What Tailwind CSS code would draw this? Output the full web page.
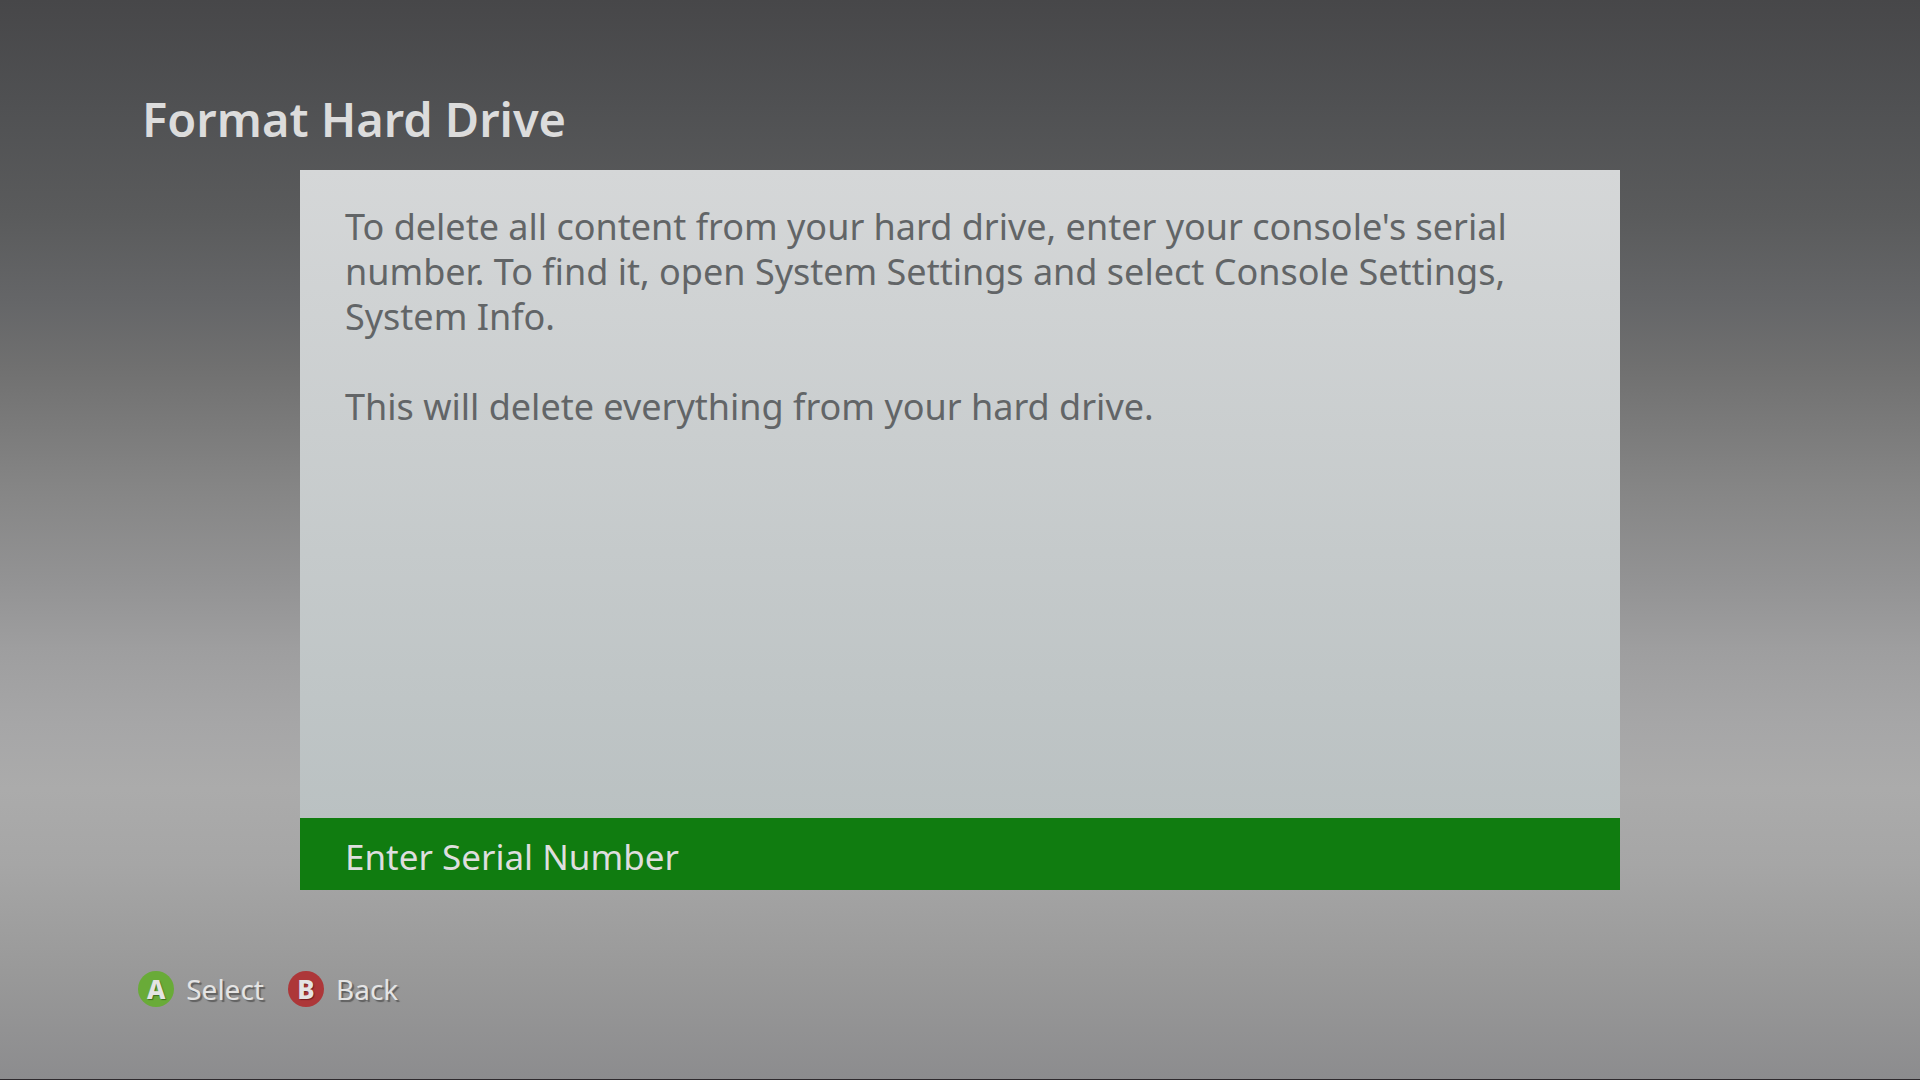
<!DOCTYPE html>
<html lang="en">
<head>
<meta charset="utf-8">
<meta name="viewport" content="width=device-width, initial-scale=1">
<title>Format Hard Drive</title>
<script src="https://cdn.jsdelivr.net/npm/@tailwindcss/browser@4"></script>
</head>
<body class="flex min-h-screen flex-col border-b border-[#2e2a2e] bg-[linear-gradient(to_bottom,#474749_0%,#505153_10%,#5a5b5c_20%,#656668_28%,#707070_34%,#858585_45%,#939394_54%,#9e9e9f_60%,#a6a6a7_67%,#ababab_73%,#a6a6a6_80%,#999999_90%,#8c8c8e_100%)] font-['Noto_Sans',sans-serif]">
  <header class="px-[7.4%] pt-[87px]">
    <h1 class="text-[47px]/[64px] font-semibold text-[#dcdcdc]">Format Hard Drive</h1>
  </header>

  <main class="mx-auto mt-[19px] flex w-[68.75%] flex-col">
    <section class="min-h-[648px] space-y-[45px] bg-linear-to-b from-[#d5d7d8] to-[#bac1c2] px-[45px] pt-[34px] text-4xl/[45px] text-[#626567]">
      <p>To delete all content from your hard drive, enter your console's serial<br>number. To find it, open System Settings and select Console Settings,<br>System Info.</p>
      <p>This will delete everything from your hard drive.</p>
    </section>
    <button type="button" class="h-[72px] bg-[#107c10] px-[45px] pt-1 text-left text-[35px]/[45px] text-[#dedede]">Enter Serial Number</button>
  </main>

  <footer class="flex gap-6 px-[7.2%] pt-[79px] text-[28px]/[40px] text-[#e4e4e4]">
    <button type="button" class="flex items-center gap-3 text-shadow-[2px_2px_1px_#606060]">
      <span class="flex size-9 items-center justify-center rounded-full bg-[#69ab38] text-[26px] font-extrabold text-shadow-[1px_1px_1px_#3e6e20]">A</span>Select
    </button>
    <button type="button" class="flex items-center gap-3 text-shadow-[2px_2px_1px_#606060]">
      <span class="flex size-9 items-center justify-center rounded-full bg-[#ad3739] text-[26px] font-extrabold text-shadow-[1px_1px_1px_#701e20]">B</span>Back
    </button>
  </footer>
</body>
</html>
